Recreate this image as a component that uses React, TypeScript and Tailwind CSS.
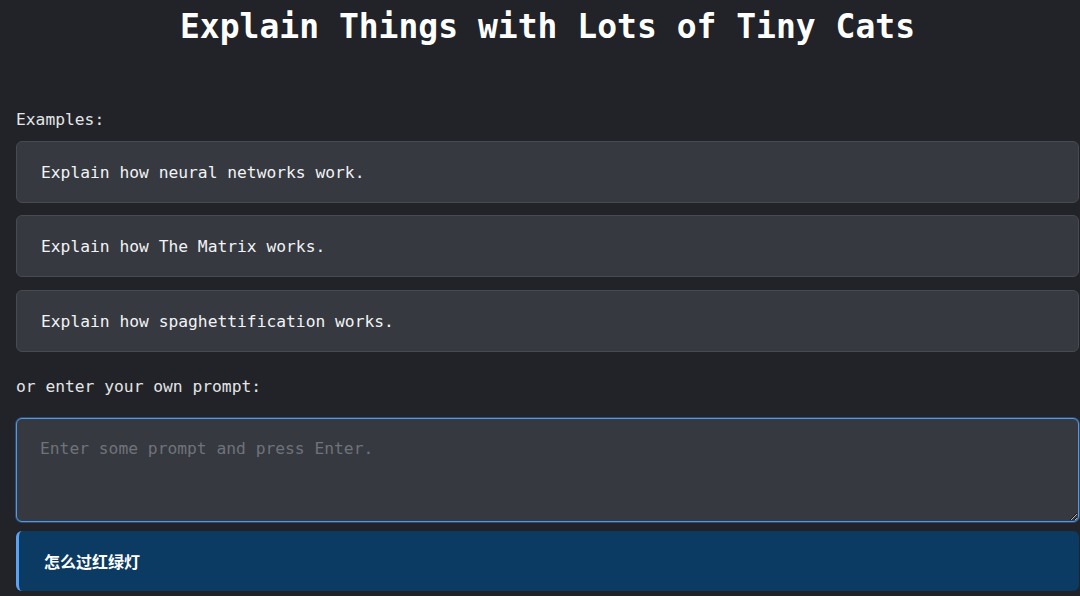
import React from "react";

const mono = { fontFamily: '"DejaVu Sans Mono", "Liberation Mono", monospace' };

export default function App() {
  const examples = [
    "Explain how neural networks work.",
    "Explain how The Matrix works.",
    "Explain how spaghettification works.",
  ];
  return (
    <div className="w-[1080px] h-[596px] overflow-hidden bg-[#212328] text-[#e8e9eb]" style={mono}>
      <div className="ml-4 w-[1063px] flex flex-col">
        <h1 className="h-[50px] pt-[2px] leading-[50px] text-center text-[33px] font-bold text-white">
          Explain Things with Lots of Tiny Cats
        </h1>
        <div className="mt-[58px] text-[16.3px] leading-6 text-[#e4e5e7]">Examples:</div>
        <div className="mt-[9px] flex flex-col gap-3">
          {examples.map((e, i) => (
            <div
              key={e}
              className={
                "h-[62px] flex items-center px-6 pt-[2px] rounded-md bg-[#363940] border border-[#474a51] text-[16.3px] text-[#f2f3f5]" +
                (i === 2 ? " mt-px" : "")
              }
            >
              {e}
            </div>
          ))}
        </div>
        <div className="mt-[23px] text-[16.3px] leading-6 text-[#e4e5e7]">or enter your own prompt:</div>
        <textarea
          className="mt-[19px] h-[104px] w-full rounded-md bg-[#363940] border border-[#5499e6] shadow-[0_0_0_1px_#2b4a70] px-[23px] pt-[18px] text-[16.3px] leading-6 text-white placeholder:text-[#6f737a] outline-none"
          placeholder="Enter some prompt and press Enter."
          style={mono}
        />
        <div
          className="mt-[9px] h-[60px] flex items-center rounded-md bg-[#0b3a62] border-l-[3px] border-[#5aa3f2] pl-[25px] text-[16px] font-bold text-white"
          style={{ fontFamily: '"Noto Sans CJK SC", "Noto Sans", sans-serif' }}
        >
          怎么过红绿灯
        </div>
      </div>
    </div>
  );
}
